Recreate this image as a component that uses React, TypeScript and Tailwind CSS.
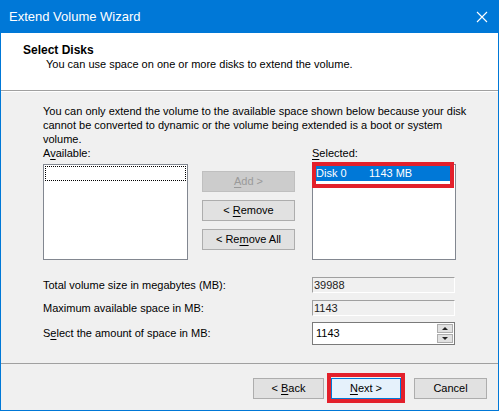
import React from 'react';

// Win10-ish "Extend Volume Wizard" dialog, Select Disks page

const FONT = "font-['Liberation_Sans',Arial,sans-serif]";

function U({ children }: { children: React.ReactNode }) {
  return <span className="underline underline-offset-[2px]">{children}</span>;
}

function Btn({
  children,
  disabled = false,
  className = '',
}: {
  children: React.ReactNode;
  disabled?: boolean;
  className?: string;
}) {
  return (
    <div
      className={`h-[21px] flex items-center justify-center border ${
        disabled
          ? 'bg-[#cccccc] border-[#bfbfbf] text-[#9a9a9a]'
          : 'bg-[#e1e1e1] border-[#adadad] text-black'
      } ${className}`}
    >
      <span className="whitespace-pre">{children}</span>
    </div>
  );
}

function ReadOnlyField({ value }: { value: string }) {
  return (
    <div className="w-[143px] h-[16px] bg-[#f0f0f0] border-t border-l border-[#a0a0a0] border-b border-r border-b-white border-r-white flex items-center pl-[1px] text-[#222]">
      {value}
    </div>
  );
}

export default function App() {
  return (
    <div
      className={`w-[499px] h-[411px] bg-[#f0f0f0] border-x border-b border-[#0078d7] flex flex-col ${FONT} text-[11px] text-black`}
    >
      {/* Title bar */}
      <div className="h-[33px] shrink-0 bg-[#0078d7] flex items-center justify-between pl-[9px] pr-[11px] -mx-px">
        <span className="text-white text-[13px] mt-[1px]">Extend Volume Wizard</span>
        <svg width="12" height="12" viewBox="0 0 12 12" className="mt-[1px]">
          <path d="M1 1 L11 11 M11 1 L1 11" stroke="white" strokeWidth="1.1" />
        </svg>
      </div>

      {/* Header */}
      <div className="h-[58px] shrink-0 bg-white border-b border-[#a0a0a0] pl-[22px] pt-[9px]">
        <div className="font-bold text-[12px] leading-[16px]">Select Disks</div>
        <div className="pl-[23px] leading-[15px] mt-[-1px]">
          You can use space on one or more disks to extend the volume.
        </div>
      </div>

      {/* Body */}
      <div className="flex-1 pl-[42px] pt-[12px] border-t border-white">
        <p className="leading-[14px] whitespace-nowrap">
          You can only extend the volume to the available space shown below because your disk
          <br />
          cannot be converted to dynamic or the volume being extended is a boot or system
          <br />
          volume.
        </p>

        <div className="flex">
          {/* Available */}
          <div className="w-[145px]">
            <div className="leading-[14px]">
              A<U>v</U>ailable:
            </div>
            <div className="mt-[4px] h-[96px] bg-white border border-[#828790] p-[1px]">
              <div className="h-[15px] border border-dotted border-black" />
            </div>
          </div>

          {/* Add / Remove */}
          <div className="ml-[14px] w-[93px] pt-[25px] flex flex-col gap-[8px]">
            <Btn disabled>
              <U>A</U>dd &gt;
            </Btn>
            <Btn>
              &lt; <U>R</U>emove
            </Btn>
            <Btn>
              &lt; Re<U>m</U>ove All
            </Btn>
          </div>

          {/* Selected */}
          <div className="ml-[17px] w-[144px] relative">
            <div className="leading-[14px]">
              <U>S</U>elected:
            </div>
            <div className="mt-[4px] h-[96px] bg-white border border-[#828790] p-[1px]">
              <div className="h-[15px] bg-[#0078d7] text-white flex items-center pl-[2px]">
                <span className="w-[53px]">Disk 0</span>
                <span>1143 MB</span>
              </div>
            </div>
            {/* annotation */}
            <div className="absolute left-0 top-[16px] w-[142px] h-[26px] border-[4px] border-[#e3202b]" />
          </div>
        </div>

        {/* Sizes */}
        <div className="mt-[17px] flex flex-col gap-[6px]">
          <div className="flex items-center">
            <span className="w-[269px]">Total volume size in megabytes (MB):</span>
            <ReadOnlyField value="39988" />
          </div>
          <div className="flex items-center">
            <span className="w-[269px]">Maximum available space in MB:</span>
            <ReadOnlyField value="1143" />
          </div>
          <div className="flex items-center">
            <span className="w-[269px]">
              S<U>e</U>lect the amount of space in MB:
            </span>
            <div className="w-[143px] h-[23px] bg-white border border-[#7a7a7a] flex items-center justify-between pl-[3px] pr-[1px]">
              <span>1143</span>
              <div className="flex flex-col gap-[1px]">
                <div className="w-[16px] h-[9px] bg-[#e1e1e1] border border-[#adadad] flex items-center justify-center">
                  <svg width="6" height="3" viewBox="0 0 6 3">
                    <path d="M0 3 L3 0 L6 3 Z" fill="#222" />
                  </svg>
                </div>
                <div className="w-[16px] h-[9px] bg-[#e1e1e1] border border-[#adadad] flex items-center justify-center">
                  <svg width="6" height="3" viewBox="0 0 6 3">
                    <path d="M0 0 L6 0 L3 3 Z" fill="#222" />
                  </svg>
                </div>
              </div>
            </div>
          </div>
        </div>
      </div>

      {/* Footer */}
      <div className="h-[47px] shrink-0 border-t border-[#a0a0a0] flex items-start pt-[14px] pl-[252px]">
        <Btn className="w-[71px]">
          &lt; <U>B</U>ack
        </Btn>
        <div className="relative ml-[7px]">
          <Btn className="w-[70px] bg-[#e5f1fb]! border-[#0078d7]!">
            <U>N</U>ext &gt;
          </Btn>
          <div className="absolute left-[-4px] top-[-5px] w-[78px] h-[30px] border-[4px] border-[#e3202b]" />
        </div>
        <Btn className="w-[73px] ml-[13px]">Cancel</Btn>
      </div>
    </div>
  );
}
